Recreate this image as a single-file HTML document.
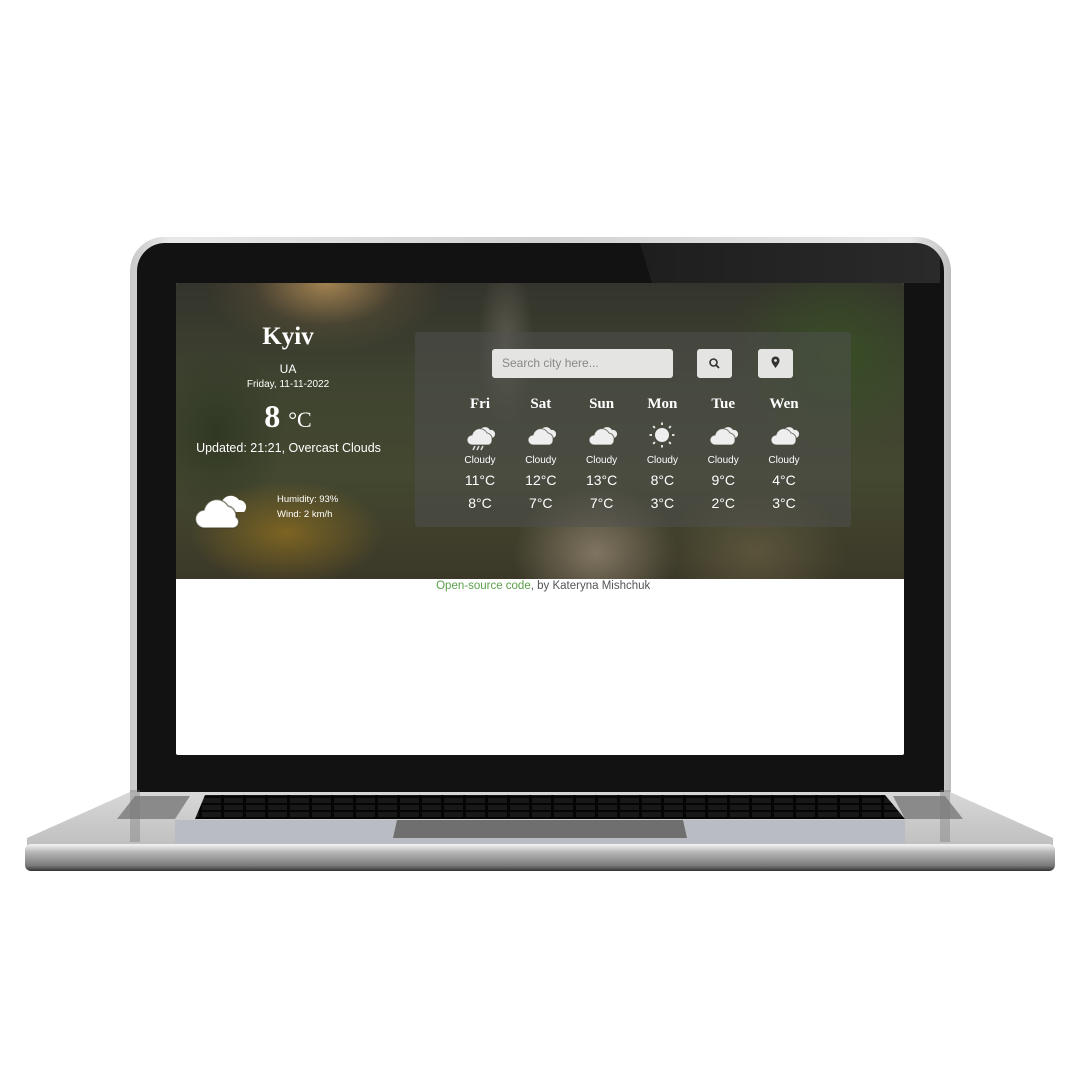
<!DOCTYPE html>
<html><head><meta charset="utf-8"><style>
*{margin:0;padding:0;box-sizing:border-box}
body{width:1080px;height:1080px;background:#fff;position:relative;overflow:hidden;font-family:"Liberation Sans",sans-serif}
.lid{position:absolute;left:130px;top:237px;width:821px;height:565px;border-radius:34px 34px 10px 10px;background:linear-gradient(90deg,#c9c9c9,#e8e8e8 5%,#d2d2d2 50%,#e8e8e8 95%,#bdbdbd)}
.bezel{position:absolute;left:137px;top:243px;width:807px;height:555px;border-radius:28px 28px 6px 6px;background:#121212}
.gloss{position:absolute;left:640px;top:243px;width:300px;height:40px;background:linear-gradient(90deg,rgba(255,255,255,0.05),rgba(255,255,255,0.1));clip-path:polygon(0 0,100% 0,100% 100%,4% 100%)}
.screen{position:absolute;left:176px;top:283px;width:728px;height:472px;background:#fff;overflow:hidden;border-radius:2px}
.img{position:absolute;left:0;top:0;width:728px;height:296px;
background:
radial-gradient(ellipse 120px 70px at 150px 0px,rgba(190,150,90,0.8),rgba(110,90,60,0.3) 60%,transparent 100%),
radial-gradient(ellipse 110px 90px at 420px 270px,rgba(150,135,115,0.75),transparent 75%),
radial-gradient(ellipse 40px 120px at 330px 60px,rgba(120,115,105,0.5),transparent 70%),
radial-gradient(ellipse 130px 70px at 110px 250px,rgba(150,115,30,0.7),transparent 75%),
radial-gradient(ellipse 120px 90px at 580px 270px,rgba(110,100,70,0.6),transparent 75%),
radial-gradient(ellipse 150px 140px at 660px 70px,rgba(55,80,35,0.85),transparent 70%),
radial-gradient(ellipse 100px 120px at 40px 150px,rgba(40,50,30,0.7),transparent 70%),
linear-gradient(180deg,#34342c 0%,#3f4430 35%,#444830 65%,#3b3828 100%)}
.panel{position:absolute;left:239px;top:49px;width:436px;height:195px;background:rgba(80,80,80,0.5);border-radius:3px}
.w{color:#fff;position:absolute;text-align:center}
.serif{font-family:"Liberation Serif",serif;font-weight:bold}
.search{position:absolute;left:316px;top:66px;width:181px;height:29px;background:#e4e4e2;border-radius:3px;color:#888;font-size:12px;line-height:29px;padding-left:10px}
.btn{position:absolute;top:66px;width:35px;height:29px;background:#e4e4e2;border-radius:3px}
.day{position:absolute;width:60px;text-align:center;color:#fff}
.base{position:absolute;left:25px;top:790px;width:1030px;height:82px}
</style></head><body>
<div class="lid"></div>
<div class="bezel"></div>
<div class="gloss"></div>
<div class="screen">
 <div class="img"></div>
 <div class="w serif" style="left:62px;top:40px;width:100px;font-size:25px">Kyiv</div>
 <div class="w" style="left:62px;top:79px;width:100px;font-size:12px">UA</div>
 <div class="w" style="left:52px;top:96px;width:120px;font-size:10px">Friday, 11-11-2022</div>
 <div class="w serif" style="left:62px;top:115px;width:100px;font-size:32px">8 <span style="font-size:22px;font-weight:normal">°C</span></div>
 <div class="w" style="left:10px;top:158px;width:205px;font-size:12.5px">Updated: 21:21, Overcast Clouds</div>
 <svg style="position:absolute;left:19px;top:207px" width="55" height="40" viewBox="0 0 55 40"><path d="M26 14a10 10 0 0 1 18-4a7 7 0 0 1 5 12l-10 0z" fill="#fff"/><path d="M10 38a9 9 0 0 1-1-18a13 13 0 0 1 24-4a10 10 0 0 1 8 11a6 6 0 0 1-3 11z" fill="#fff" stroke="rgba(60,60,40,0.6)" stroke-width="1.5"/></svg>
 <div class="w" style="left:101px;top:209px;text-align:left;font-size:9.5px;line-height:15px">Humidity: 93%<br>Wind: 2 km/h</div>
 <div class="panel"></div>
 <div class="search">Search city here...</div>
 <div class="btn" style="left:521px"><svg width="35" height="29" viewBox="0 0 35 29"><circle cx="16.5" cy="13.5" r="3.5" fill="none" stroke="#333" stroke-width="1.6"/><path d="M19 16l3 3" stroke="#333" stroke-width="1.8"/></svg></div>
 <div class="btn" style="left:582px"><svg width="35" height="29" viewBox="0 0 35 29"><path d="M17.5 19c-3-4-4-5.5-4-7.5a4 4 0 0 1 8 0c0 2-1 3.5-4 7.5z" fill="#333"/><circle cx="17.5" cy="11.5" r="1.4" fill="#e4e4e2"/></svg></div>
 <div id="days"></div>
</div>
<svg class="base" viewBox="0 0 1030 82" preserveAspectRatio="none">
 <defs><linearGradient id="g1" x1="0" y1="0" x2="0" y2="1"><stop offset="0" stop-color="#d8d8d8"/><stop offset="1" stop-color="#bfbfbf"/></linearGradient>
 <linearGradient id="g2" x1="0" y1="0" x2="0" y2="1"><stop offset="0" stop-color="#f4f4f4"/><stop offset="0.3" stop-color="#b8b8b8"/><stop offset="0.8" stop-color="#7a7a7a"/><stop offset="1" stop-color="#333"/></linearGradient>
 <pattern id="keys" width="22" height="7" patternUnits="userSpaceOnUse"><rect width="22" height="7" fill="#050505"/><rect x="1" y="1" width="19" height="5" fill="#181818"/></pattern></defs>
 <path d="M105 2 L925 2 L1028 48 L1028 56 L2 56 L2 48 Z" fill="url(#g1)"/>
 <rect x="0" y="54" width="1030" height="27" rx="6" fill="url(#g2)"/>
 <path d="M180 5 L860 5 L880 29 L170 29 Z" fill="url(#keys)"/>
 <path d="M92 29 L150 29 L165 6 L110 6 Z" fill="#8a8a8a"/>
 <path d="M938 29 L880 29 L868 6 L920 6 Z" fill="#8a8a8a"/>
 <rect x="150" y="30" width="730" height="24" fill="#b9bcc2"/>
 <path d="M372 30 L658 30 L662 48 L368 48 Z" fill="#6f6f6f"/>
 <rect x="105" y="0" width="10" height="52" fill="rgba(120,120,120,0.4)"/>
 <rect x="915" y="0" width="10" height="52" fill="rgba(120,120,120,0.4)"/>
</svg>
<script>
var d=[["Fri","11","8",1],["Sat","12","7",0],["Sun","13","7",2],["Mon","8","3",3],["Tue","9","2",0],["Wen","4","3",0]];
var cloud='<path d="M14 11a6 6 0 0 1 11-2a4 4 0 0 1 2 8l-8 0z" fill="#eee"/><path d="M7 24a5 5 0 0 1 0-10a8 8 0 0 1 15-2a6 6 0 0 1 5 7a5 5 0 0 1-3 5z" fill="#eee" stroke="rgba(70,70,60,0.7)" stroke-width="1"/>';
var h='';
d.forEach(function(x,i){
 var l=304+i*60.8;
 var ic='';
 if(x[3]==3){ic='<circle cx="15" cy="14" r="7" fill="#eee"/>';for(var a=0;a<8;a++){var t=a*Math.PI/4;ic+='<line x1="'+(15+10*Math.cos(t))+'" y1="'+(14+10*Math.sin(t))+'" x2="'+(15+12.5*Math.cos(t))+'" y2="'+(14+12.5*Math.sin(t))+'" stroke="#eee" stroke-width="1.8"/>'}}
 else ic=cloud+(x[3]==1?'<path d="M10 25l-2 4M14 25l-2 4M18 25l-2 4" stroke="#ddd" stroke-width="1.5"/>':'');
 h+='<div class="day serif" style="left:'+(l-30)+'px;top:113px;font-size:15px">'+x[0]+'</div>';
 h+='<svg style="position:absolute;left:'+(l-15)+'px;top:138px" width="30" height="30" viewBox="0 0 30 30">'+ic+'</svg>';
 h+='<div class="day" style="left:'+(l-30)+'px;top:172px;font-size:10px">Cloudy</div>';
 h+='<div class="day" style="left:'+(l-30)+'px;top:189px;font-size:14px">'+x[1]+'°C</div>';
 h+='<div class="day" style="left:'+(l-30)+'px;top:212px;font-size:14px">'+x[2]+'°C</div>';
});
h+='<div style="position:absolute;left:0;top:297px;width:728px;text-align:center;font-size:11.5px;color:#555">&nbsp;&nbsp;<span style="color:#5aa04a">Open-source code</span>, by Kateryna Mishchuk</div>';
document.getElementById('days').innerHTML=h;
</script>
</body></html>
